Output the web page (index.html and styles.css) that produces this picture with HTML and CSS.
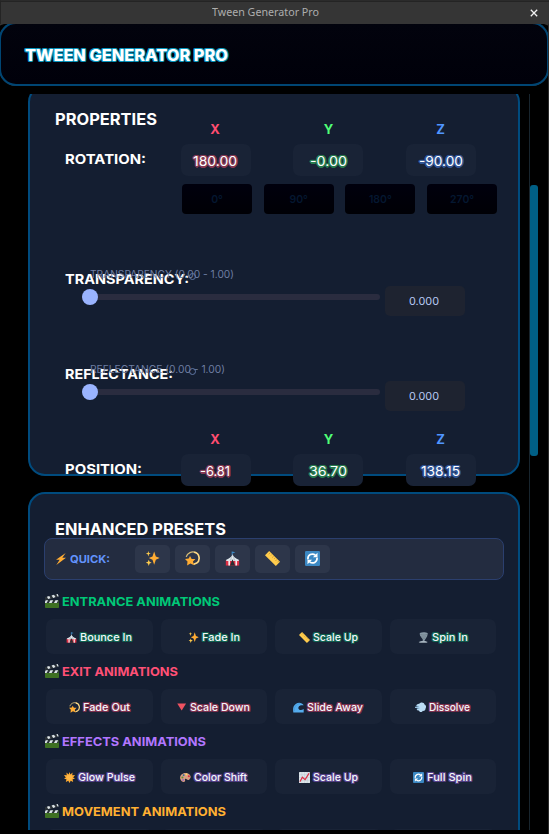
FILE: index.html
```
<!DOCTYPE html>
<html lang="en">
<head>
<meta charset="utf-8">
<title>Tween Generator Pro</title>
<link rel="stylesheet" href="styles.css">
</head>
<body>
<svg class="sprites" aria-hidden="true">
  <symbol id="sparkles" viewBox="0 0 36 36"><path fill="#ffac33" d="M34 16l-8-3-4-12-4 12-9 4 9 4 4 12 4-12 9-4z"/><path fill="#ffcc4d" d="M8 0l1.500 4.500L14 6l-4.500 1.500L8 13 6.500 7.500 2 6l4.500-1.500zM9 21l2 5 5 2-5 2-2 6-2-6-5-2 5-2z"/></symbol>
  <symbol id="dizzy" viewBox="0 0 36 36"><path fill="none" stroke="#d6bd79" stroke-width="3" d="M3 14C5 5 17-1 26 4"/><path fill="none" stroke="#ffd983" stroke-width="4" d="M22 3c14 2 15 20 6 26l-7 3"/><path fill="#ffac33" d="M12 12l4 7 9 0-6 6 3 9-9-4-8 5 1-10-6-6 9-1z"/></symbol>
  <symbol id="tent" viewBox="0 0 36 36"><path fill="#3b88c3" d="M17 1l8 2-7 3v4h-2V1z"/><path fill="#dd2e44" d="M2 22h32v13H2z"/><path fill="#e1e8ed" d="M18 8c-2 7-8 10-15 13v3h30v-3C26 18 20 15 18 8z"/><path fill="#b8c4cd" d="M18 8l-7 15h4zM18 8l7 15h-4z"/><path fill="#f4e8ea" d="M8 24h4v11H8zM25 24h4v11h-4z"/><path fill="#292f33" d="M18 20l6 15H12z"/></symbol>
  <symbol id="ruler" viewBox="0 0 36 36"><path fill="#ffcc4d" d="M0 10l10-10 26 26-10 10z"/><path stroke="#bb8a2b" stroke-width="1.600" d="M13 4l-4 4M17 8l-3 3M21 12l-4 4M25 16l-3 3M29 20l-4 4M33 24l-3 3"/></symbol>
  <symbol id="cycle" viewBox="0 0 36 36"><rect width="36" height="36" rx="3" fill="#3b88c3"/><g fill="none" stroke="#fff" stroke-width="4"><path d="M7 20C6 9 17 4 25 10M29 16c1 11-10 16-18 10"/></g><path fill="#fff" d="M30 4v11H19zM6 32V21h11z"/></symbol>
  <symbol id="bolt" viewBox="0 0 36 36"><path fill="#ffac33" d="M32 0L3 20h11L4 36l29-22H22z"/></symbol>
  <symbol id="clapper" viewBox="0 0 36 36"><path fill="#3f7123" d="M0 17h36v17a2 2 0 0 1-2 2H2a2 2 0 0 1-2-2z"/><path fill="#2b3238" d="M0 8L33 0l2 7L2 16h33v7H0z"/><path fill="#dce4e8" d="M5 7l6-2 3 6-6 2zM17 4l6-2 4 6-6 2zM29 1l4-1 2 6-2 1zM2 16h6l-4 7H0v-3zM14 16h7l-4 7h-7zM27 16h7l-4 7h-7z"/></symbol>
  <symbol id="tornado" viewBox="0 0 36 36"><path fill="#8899a6" d="M6 3c8-4 20-3 26 1l-2 10-5 8-4 7 6 4H6l9-4c3-4-1-7-4-11-4-5-6-10-5-15z"/><path fill="none" stroke="#66757f" stroke-width="2" d="M8 8c8 3 17 3 23-1M11 15c6 3 12 2 17-1M15 22c4 1 6 0 9-1"/><path fill="#aab8c2" d="M2 33c10-5 22-5 30 0l-4 2H6z"/></symbol>
  <symbol id="down" viewBox="0 0 36 36"><path fill="#ee5261" d="M4 5h29L18.500 28z"/></symbol>
  <symbol id="wave" viewBox="0 0 36 36"><path fill="#55acee" d="M35 11C29-1 9-1 2 15c-3 7-1 16-1 19h34V23c-10 8-20 1-17-6 2-6 9-7 17-6z"/><path fill="none" stroke="#3f93d4" stroke-width="2" d="M5 30C2 17 11 6 24 5"/></symbol>
  <symbol id="puff" viewBox="0 0 36 36"><path fill="#bbddf5" d="M15 5c5-7 16-3 16 3 6 2 6 9 4 12 0 8-6 10-9 9-4 7-13 4-13-1-5 1-8-4-6-6l8-2-15-1v-3l14-1-9-2 1-5z"/><path fill="none" stroke="#8ec2e8" stroke-width="2" d="M0 17h15M3 12l10 2M5 23l10-2"/></symbol>
  <symbol id="sun" viewBox="0 0 36 36"><path fill="#ffac33" d="M18 0l3 8 7-6-1 9 9-1-6 8 6 4-8 2 2 9-8-4-4 7-4-7-8 4 2-9-8-2 6-4-6-8 9 1-1-9 7 6z"/><circle cx="18" cy="18" r="9" fill="#ffb847"/></symbol>
  <symbol id="palette" viewBox="0 0 36 36"><path fill="#d99e82" d="M18 3C5 3-2 14 1 23c3 10 12 11 15 8 3-4-3-7 2-9 5-1 5 7 12 3C41 16 32 3 18 3z"/><circle cx="8" cy="18" r="3.500" fill="#5c913b"/><circle cx="12" cy="10" r="3" fill="#269"/><circle cx="21" cy="8" r="3" fill="#ffdc5d"/><circle cx="29" cy="14" r="3.500" fill="#dd2e44"/><circle cx="10" cy="26" r="3" fill="#9266cc"/></symbol>
  <symbol id="chart" viewBox="0 0 36 36"><rect width="36" height="36" rx="2" fill="#dce4e9"/><path fill="none" stroke="#aebcc6" d="M9 0v36M18 0v36M27 0v36M0 9h36M0 18h36M0 27h36"/><path fill="none" stroke="#dd2e44" stroke-width="4" d="M3 32l8-15 9 8L33 4"/></symbol>
</svg>

<div class="titlebar"><span class="fit wt" data-w="107">Tween Generator Pro</span>
  <svg class="close" viewBox="0 0 8 8"><path d="M.8.8l6.400 6.400M7.200.8L.8 7.200"/></svg></div>
<div class="app">
  <div class="headclip"><header class="header"><h1 class="fit" data-w="203">TWEEN GENERATOR PRO</h1></header></div>
  <div class="viewport">
    <main class="content">
      <section class="card properties">
        <h2><span class="fit" data-w="102">PROPERTIES</span></h2>
        <div class="vector">
          <span></span><b class="axis x">X</b><b class="axis y">Y</b><b class="axis z">Z</b>
          <span class="label"><span class="fit" data-w="81">ROTATION:</span></span>
          <div class="num x"><span class="fit" data-w="44">180.00</span></div>
          <div class="num y"><span class="fit" data-w="37">-0.00</span></div>
          <div class="num z"><span class="fit" data-w="44">-90.00</span></div>
        </div>
        <div class="angles"><div>0°</div><div>90°</div><div>180°</div><div>270°</div></div>
        <div class="slider">
          <span class="label"><span class="fit" data-w="124">TRANSPARENCY:</span></span>
          <span class="caption"><span class="fit" data-w="144">TRANSPARENCY (0.00 - 1.00)</span></span><i class="ring"></i>
          <div class="control"><div class="track"><i class="knob"></i></div><div class="value"><span class="fit" data-w="30">0.000</span></div></div>
        </div>
        <div class="slider last">
          <span class="label"><span class="fit" data-w="108">REFLECTANCE:</span></span>
          <span class="caption"><span class="fit" data-w="135">REFLECTANCE (0.00 - 1.00)</span></span><i class="ring"></i>
          <div class="control"><div class="track"><i class="knob"></i></div><div class="value"><span class="fit" data-w="30">0.000</span></div></div>
        </div>
        <div class="vector">
          <span></span><b class="axis x">X</b><b class="axis y">Y</b><b class="axis z">Z</b>
          <span class="label"><span class="fit" data-w="77">POSITION:</span></span>
          <div class="num x"><span class="fit" data-w="30">-6.81</span></div>
          <div class="num y"><span class="fit" data-w="38">36.70</span></div>
          <div class="num z"><span class="fit" data-w="39">138.15</span></div>
        </div>
      </section>
      <section class="card presets">
        <h2><span class="fit" data-w="171">ENHANCED PRESETS</span></h2>
        <div class="quick">
          <svg class="bolt"><use href="#bolt"/></svg><span class="quicklabel"><span class="fit" data-w="40">QUICK:</span></span>
          <div class="q"><svg><use href="#sparkles"/></svg></div><div class="q"><svg><use href="#dizzy"/></svg></div><div class="q"><svg><use href="#tent"/></svg></div><div class="q"><svg><use href="#ruler"/></svg></div><div class="q"><svg><use href="#cycle"/></svg></div>
        </div>
        <div class="group entrance">
          <h3><svg><use href="#clapper"/></svg><span class="fit" data-w="158">ENTRANCE ANIMATIONS</span></h3>
          <div class="grid">
            <div class="btn"><svg><use href="#tent"/></svg><span class="fit" data-w="52">Bounce In</span></div>
            <div class="btn"><svg><use href="#sparkles"/></svg><span class="fit" data-w="38">Fade In</span></div>
            <div class="btn"><svg><use href="#ruler"/></svg><span class="fit" data-w="45">Scale Up</span></div>
            <div class="btn"><svg><use href="#tornado"/></svg><span class="fit" data-w="36">Spin In</span></div>
          </div>
        </div>
        <div class="group exit">
          <h3><svg><use href="#clapper"/></svg><span class="fit" data-w="116">EXIT ANIMATIONS</span></h3>
          <div class="grid">
            <div class="btn"><svg><use href="#dizzy"/></svg><span class="fit" data-w="47">Fade Out</span></div>
            <div class="btn narrow"><svg><use href="#down"/></svg><span class="fit" data-w="60">Scale Down</span></div>
            <div class="btn"><svg><use href="#wave"/></svg><span class="fit" data-w="56">Slide Away</span></div>
            <div class="btn"><svg><use href="#puff"/></svg><span class="fit" data-w="41">Dissolve</span></div>
          </div>
        </div>
        <div class="group effects">
          <h3><svg><use href="#clapper"/></svg><span class="fit" data-w="144">EFFECTS ANIMATIONS</span></h3>
          <div class="grid">
            <div class="btn"><svg><use href="#sun"/></svg><span class="fit" data-w="57">Glow Pulse</span></div>
            <div class="btn"><svg><use href="#palette"/></svg><span class="fit" data-w="53">Color Shift</span></div>
            <div class="btn"><svg><use href="#chart"/></svg><span class="fit" data-w="45">Scale Up</span></div>
            <div class="btn"><svg><use href="#cycle"/></svg><span class="fit" data-w="45">Full Spin</span></div>
          </div>
        </div>
        <div class="group movement">
          <h3><svg><use href="#clapper"/></svg><span class="fit" data-w="164">MOVEMENT ANIMATIONS</span></h3>
          <div class="grid"><div class="btn"></div><div class="btn"></div><div class="btn"></div><div class="btn"></div></div>
        </div>
      </section>
    </main>
    <div class="scrollbar"><div class="thumb"></div></div>
  </div>
</div>
<script src="fit.js"></script>
</body>
</html>
```
FILE: styles.css
```
* { box-sizing: border-box; }
html, body { height: 100%; }
body { margin: 0; width: 549px; height: 834px; overflow: hidden; background: #000; color: #fff; font-family: Inter, sans-serif; display: flex; flex-direction: column; }
h1, h2, h3 { margin: 0; }
svg { display: block; flex: none; }
.sprites { display: none; }
.fit { display: inline-block; white-space: nowrap; transform-origin: 0 50%; }

.titlebar { flex: none; height: 24px; padding: 0 11px 0 212px; border-top: 1px solid #2b2b2b; border-left: 1px solid #242424; background: #353535; box-shadow: inset 0 1px #242424; display: flex; align-items: center; justify-content: space-between; font: 11px/14px "Noto Sans", sans-serif; color: #adadad; }
.titlebar .wt { margin: -1px 0 0 -1px; }
.close { width: 8px; height: 8px; margin-top: 1px; stroke: #f0f0f0; stroke-width: 1.300; }

.app { flex: 1; height: 810px; border-right: 1px solid #2c2c2c; overflow: hidden; }
.headclip { height: 62px; overflow: hidden; background: #353535; }
.header { width: 550px; height: 64px; margin: -2px 0 0 -1px; padding: 3px 24px 0; border: 2px solid #004573; border-radius: 17px; background: linear-gradient(#02030d, #00000a); box-shadow: 0 20px 0 20px #000; display: flex; align-items: center; }
.header h1 { font-size: 15.500px; line-height: 20px; font-weight: 800; text-shadow: 1px 0 #0797bf, -1px 0 #0797bf, 0 1px #0797bf, 0 -1px #0797bf, 1px 1px #076f91, -1px 1px #076f91, 1px -1px #076f91, -1px -1px #076f91; }

.viewport { margin-top: 8px; height: 736px; overflow: hidden; display: flex; }
.content { width: 492px; margin: -9px 9px 0 28px; flex: none; }
.card { border: 2px solid #004b7e; border-radius: 17px; background: #141e31; }
.properties { height: 391px; padding-top: 22px; }
.card h2 { height: 21px; padding-left: 25px; font-size: 15.500px; line-height: 22px; font-weight: 650; }

.vector { display: grid; grid-template-columns: 116px 112px 113px 70px; grid-template-rows: 14px 32px; row-gap: 8px; padding-left: 35px; position: relative; }
.properties h2 + .vector { margin-top: -8px; }
.axis { width: 68px; text-align: center; font-size: 13px; line-height: 14px; font-weight: 700; }
.axis.x { color: #ff4d70; }
.axis.y { width: 71px; color: #50ff78; }
.axis.z { width: 69px; color: #5096ff; }
.label { display: block; height: 30px; font-size: 13.500px; line-height: 30px; font-weight: 650; }
.num { width: 70px; height: 32px; border-radius: 7px; background: #192336; display: flex; align-items: center; justify-content: center; font-size: 13.300px; line-height: 16px; padding-top: 1px; --glow: #843853; }
.num.x { padding-right: 2px; }
.num.y { --glow: #277a4e; }
.num.z { padding-right: 1px; --glow: #315494; }
.num span, .btn span { text-shadow: 1px 0 var(--glow), -1px 0 var(--glow), 0 1px var(--glow), 0 -1px var(--glow), 1px 1px var(--glow), -1px 1px var(--glow), 1px -1px var(--glow), -1px -1px var(--glow), 0 0 2px var(--glow); }
.num span { text-shadow: 1.500px 0 var(--glow), -1.500px 0 var(--glow), 0 1.500px var(--glow), 0 -1.500px var(--glow), 1px 1px var(--glow), -1px 1px var(--glow), 1px -1px var(--glow), -1px -1px var(--glow), 0 0 2px var(--glow); }
.angles { display: grid; grid-template-columns: repeat(4, 70px); gap: 11.700px; margin-top: 8px; padding-left: 152px; }
.angles div { height: 30px; border-radius: 4px; background: linear-gradient(#00000d, #000005); color: #041730; font-size: 10.500px; font-weight: 600; line-height: 31px; text-align: center; }

.slider { position: relative; height: 95px; padding-left: 35px; }
.angles + .slider { margin-top: 50px; }
.slider.last { height: 73px; }
.caption { position: absolute; left: 60px; top: 3px; font-size: 10.300px; line-height: 15px; color: #6d7da1; }
.ring { position: absolute; left: 159px; top: 9px; width: 7px; height: 7px; border: 1px solid #6077a5; border-radius: 50%; }
.control { display: flex; gap: 5px; margin: -8px 0 0 17px; }
.track { position: relative; width: 298px; height: 6px; margin-top: 8px; border-radius: 3px; background: #2a2c3f; }
.knob { position: absolute; left: 0; top: -5px; width: 16px; height: 16px; border-radius: 50%; background: #9ab4ff; }
.value { width: 80px; height: 30px; padding: 2px 2px 0 0; border-radius: 5px; background: #1e2330; color: #b8c9f4; display: flex; align-items: center; justify-content: center; font-size: 10.500px; line-height: 14px; }

.presets { height: 400px; margin-top: 16px; padding-top: 25px; }
.quick { height: 42px; margin: -2px 14px 4px; padding-left: 10px; border: 1px solid #2b3f6e; border-radius: 8px; background: #232c40; display: flex; align-items: center; gap: 5px; }
.quick .bolt { width: 12px; height: 12px; }
.quicklabel { width: 60px; margin: 2px 0 0 -2px; font-size: 10.500px; line-height: 14px; font-weight: 700; color: #6293fc; }
.q { width: 35px; height: 28px; border-radius: 5px; background: #2d364a; display: flex; align-items: center; justify-content: center; }
.q svg { width: 15px; height: 15px; margin-bottom: 1px; }

.group { padding: 9px 22px 0 14px; }
.group h3 { height: 17px; padding-left: 1px; display: flex; align-items: center; gap: 3px; color: var(--accent); font-size: 12.300px; line-height: 17px; font-weight: 700; }
.group h3 svg { width: 14px; height: 14px; margin-bottom: 1px; }
.grid { display: grid; grid-template-columns: repeat(4, 1fr); gap: 8px; padding: 9px 0 0 2px; }
.btn { height: 35px; padding-top: 2px; border-radius: 7px; background: #192336; display: flex; align-items: center; justify-content: center; gap: 3px; font-size: 10.500px; line-height: 14px; font-weight: 500; color: #f4f6fa; }
.btn svg { width: 11px; height: 11px; margin-bottom: 1px; }
.btn.narrow { padding-right: 2px; }
.entrance { --accent: #00c877; --glow: #0f6350; }
.exit { --accent: #ff5076; --glow: #7e304f; }
.effects { --accent: #b176ff; --glow: #57418a; }
.movement { --accent: #ffb032; --glow: #7d612f; }

.scrollbar { width: 9px; height: 736px; padding-top: 91px; border-left: 1px solid #18252e; }
.thumb { width: 8px; height: 271px; border-radius: 3px; background: #005f85; }
```
FILE: fit.js
```
// Stretch each label horizontally to its designed width.
document.querySelectorAll('.fit').forEach(function (el) {
  var target = Number(el.dataset.w);
  var natural = el.getBoundingClientRect().width;
  el.style.width = target + 'px';
  el.style.transform = 'scaleX(' + target / natural + ')';
  el.style.flex = 'none';
});
```
